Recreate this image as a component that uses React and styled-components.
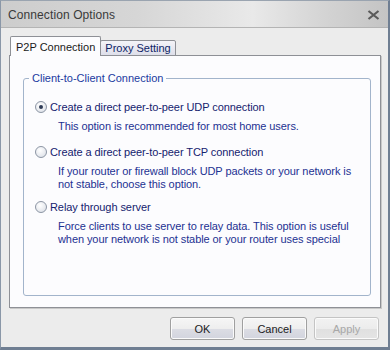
import React from "react";
import styled, { createGlobalStyle } from "styled-components";

const GlobalStyle = createGlobalStyle`
  html, body {
    margin: 0;
    padding: 0;
    background: #ffffff;
  }
  body {
    font-family: "Liberation Sans", Arial, sans-serif;
  }
`;

const Window = styled.div`
  box-sizing: border-box;
  width: 390px;
  height: 350px;
  display: flex;
  flex-direction: column;
  background: #ececec;
  border-left: 1px solid #8a97a8;
  border-right: 2px solid #6f7e92;
  border-bottom: 3px solid #6f7e92;
  border-top: 1px solid #9aa4b0;
`;

const TitleBar = styled.div`
  height: 27px;
  display: flex;
  align-items: center;
  justify-content: space-between;
  padding: 1px 8px 0 7px;
  box-sizing: border-box;
  background: linear-gradient(
    90deg,
    #cdcdcd 0%,
    #d6d6d6 35%,
    #e9e9e9 65%,
    #d2d2d2 85%,
    #c4c4c4 100%
  );
  border-bottom: 1px solid #b4b4b4;
`;

const Title = styled.span`
  font-size: 12px;
  color: #3a3a3a;
  letter-spacing: 0.1px;
`;

const Body = styled.div`
  flex: 1;
  display: flex;
  flex-direction: column;
  padding: 8px 7px 0 8px;
`;

const TabRow = styled.div`
  display: flex;
  align-items: flex-end;
  padding-left: 1px;
  height: 20px;
  position: relative;
  z-index: 1;
`;

const Tab = styled.div`
  box-sizing: border-box;
  height: ${({ active }) => (active ? "20px" : "16px")};
  padding: 0 ${({ active }) => (active ? "5px" : "4px")};
  display: flex;
  align-items: center;
  font-size: 11px;
  color: ${({ active }) => (active ? "#1a1a1a" : "#0e1e66")};
  background: ${({ active }) =>
    active ? "#fcfcfe" : "linear-gradient(#f4f4f8, #dedfea)"};
  border: 1px solid #8e9096;
  border-bottom: ${({ active }) => (active ? "none" : "1px solid #8e9096")};
  border-radius: 2px 2px 0 0;
  margin-left: ${({ active }) => (active ? "0" : "-1px")};
`;

const Panel = styled.div`
  box-sizing: border-box;
  width: 372px;
  height: 253px;
  margin-top: -1px;
  background: #fcfcfe;
  border: 1px solid #8e9096;
  box-shadow: 1px 1px 0 #c8c8c8;
  padding: 16px 13px 0 13px;
`;

const Group = styled.fieldset`
  box-sizing: border-box;
  margin: 0;
  height: 224px;
  border: 1px solid #a2b4cb;
  border-radius: 3px;
  padding: 15px 12px 0 12px;
`;

const Legend = styled.legend`
  font-size: 11px;
  color: #1a3aa0;
  padding: 0 3px;
  margin-left: -7px;
`;

const Option = styled.div`
  display: flex;
  flex-direction: column;
  margin-bottom: ${({ gap }) => gap}px;
`;

const RadioRow = styled.label`
  display: flex;
  align-items: center;
  gap: 3px;
  height: 16px;
  font-size: 11px;
  color: #15226e;
  letter-spacing: -0.08px;
  margin-left: -1px;
`;

const RadioCircle = styled.span`
  box-sizing: border-box;
  width: 12px;
  height: 12px;
  border-radius: 50%;
  border: 1px solid #8c95a4;
  background: radial-gradient(circle at 40% 35%, #ffffff 0%, #e3e6ec 70%, #cfd4dc 100%);
  display: flex;
  align-items: center;
  justify-content: center;
  &::after {
    content: "";
    width: 4px;
    height: 4px;
    border-radius: 50%;
    background: ${({ checked }) => (checked ? "#2d3a55" : "transparent")};
  }
`;

const Desc = styled.div`
  font-size: 11px;
  line-height: 13px;
  color: #1c3192;
  letter-spacing: -0.08px;
  padding: 5px 0 0 22px;
  width: 300px;
`;

const Footer = styled.div`
  display: flex;
  justify-content: flex-end;
  gap: 7px;
  padding: 9px 2px 0 0;
`;

const Button = styled.button`
  box-sizing: border-box;
  width: 65px;
  height: 23px;
  font-family: "Liberation Sans", Arial, sans-serif;
  font-size: 11px;
  color: ${({ disabled }) => (disabled ? "#a8a8a8" : "#1a1a1a")};
  border: 1px solid ${({ disabled }) => (disabled ? "#c4c4c4" : "#a0a0a0")};
  border-radius: 3px;
  background: ${({ disabled }) =>
    disabled
      ? "linear-gradient(#f2f2f2 0%, #ececec 50%, #e0e0e0 51%, #e4e4e4 100%)"
      : "linear-gradient(#f6f6f6 0%, #eeeeee 50%, #dcdde4 51%, #d2d4de 100%)"};
  box-shadow: inset 0 0 0 1px #fbfbfb;
  padding: 0;
`;

const CloseIcon = () => (
  <svg width="13" height="10" viewBox="0 0 13 10">
    <path d="M1.5 1 L11.5 9 M11.5 1 L1.5 9" stroke="#5a5a5a" strokeWidth="2.2" />
  </svg>
);

const options = [
  {
    label: "Create a direct peer-to-peer UDP connection",
    desc: ["This option is recommended for most home users."],
    checked: true,
    gap: 11,
  },
  {
    label: "Create a direct peer-to-peer TCP connection",
    desc: [
      "If your router or firewall block UDP packets or your network is",
      "not stable, choose this option.",
    ],
    gap: 8,
  },
  {
    label: "Relay through server",
    desc: [
      "Force clients to use server to relay data. This option is useful",
      "when your network is not stable or your router uses special",
    ],
    gap: 0,
  },
];

const App = () => {
  return (
    <>
      <GlobalStyle />
      <Window>
        <TitleBar>
          <Title>Connection Options</Title>
          <CloseIcon />
        </TitleBar>
        <Body>
          <TabRow>
            <Tab active>P2P Connection</Tab>
            <Tab>Proxy Setting</Tab>
          </TabRow>
          <Panel>
            <Group>
              <Legend>Client-to-Client Connection</Legend>
              {options.map((o, i) => (
                <Option key={i} gap={o.gap}>
                  <RadioRow>
                    <RadioCircle checked={o.checked} />
                    {o.label}
                  </RadioRow>
                  <Desc>
                    {o.desc.map((line, j) => (
                      <div key={j}>{line}</div>
                    ))}
                  </Desc>
                </Option>
              ))}
            </Group>
          </Panel>
          <Footer>
            <Button>OK</Button>
            <Button>Cancel</Button>
            <Button disabled>Apply</Button>
          </Footer>
        </Body>
      </Window>
    </>
  );
};

export default App;
